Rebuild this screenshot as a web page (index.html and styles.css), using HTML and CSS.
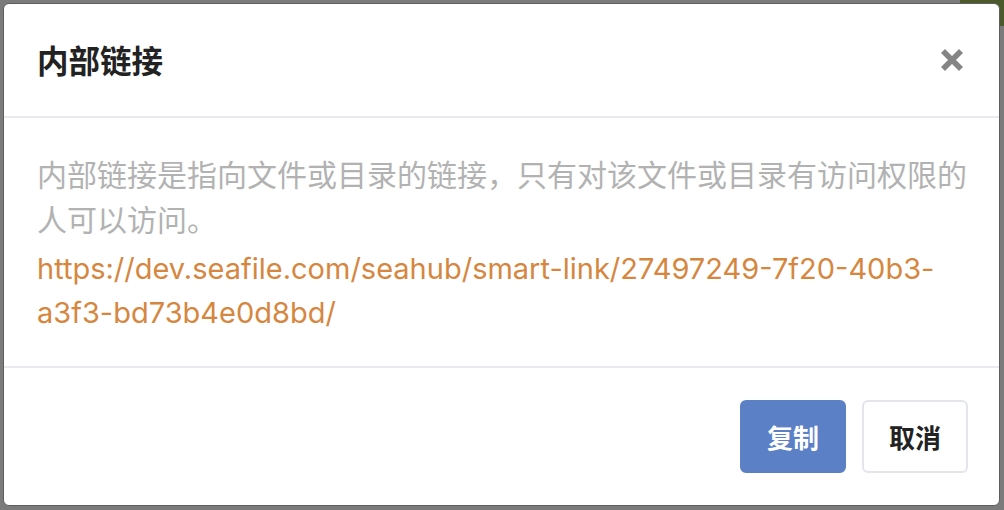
FILE: index.html
```html
<!DOCTYPE html>
<html lang="zh-CN">
  <head>
    <meta charset="UTF-8" />
    <meta name="viewport" content="width=device-width, initial-scale=1.0" />
    <title>内部链接</title>
    <link rel="stylesheet" href="styles.css">
  </head>
  <body>
    <div class="backdrop-leaf"></div>
    <div class="modal">
      <div class="modal-header">
        <h5 class="modal-title">内部链接</h5>
        <button class="close" aria-label="关闭">
          <svg width="24" height="24" viewBox="0 0 24 24">
            <path d="M3 3 L21 21 M21 3 L3 21" stroke="#858585" stroke-width="5.6" fill="none" />
          </svg>
        </button>
      </div>
      <div class="modal-body">
        <p class="tip">内部链接是指向文件或目录的链接，只有对该文件或目录有访问权限的人可以访问。</p>
        <p class="link">https://dev.seafile.com/seahub/smart-link/27497249-7f20-40b3-a3f3-bd73b4e0d8bd/</p>
      </div>
      <div class="modal-footer">
        <button class="btn btn-primary">复制</button>
        <button class="btn btn-secondary">取消</button>
      </div>
    </div>
  </body>
</html>
```

FILE: styles.css
```css
* {
  margin: 0px;
  padding: 0px;
  box-sizing: border-box;
}
body {
  width: 1004px;
  height: 510px;
  padding: 3px 4px 4px 3px;
  background-color: #7b7b7b;
  font-family: "Liberation Sans", "Noto Sans CJK SC", sans-serif;
  overflow: hidden;
  position: relative;
}
.backdrop-leaf {
  position: absolute;
  top: 0px;
  right: 0px;
  width: 44px;
  height: 26px;
  background-color: #4a5a2a;
}
.modal {
  position: relative;
  height: 503px;
  background-color: #fff;
  border: 1px solid #5e5e5e;
  border-radius: 6px;
  display: flex;
  flex-direction: column;
}
.modal-header {
  height: 114px;
  padding: 0px 35px 0px 33px;
  border-bottom: 2px solid #e9e9ee;
  display: flex;
  align-items: center;
  justify-content: space-between;
}
.modal-title {
  font-family: "Noto Sans CJK SC", sans-serif;
  font-size: 31.5px;
  font-weight: 700;
  color: #222;
  line-height: 1.5;
}
.close {
  border: none;
  background: none;
  width: 24px;
  height: 24px;
  display: flex;
}
.modal-body {
  height: 250px;
  padding: 33px 28px 0px 33px;
  border-bottom: 2px solid #e9e9ee;
}
.tip {
  font-family: "Noto Sans CJK SC", sans-serif;
  font-size: 30px;
  line-height: 45px;
  color: #b2b2b2;
  margin-bottom: 6px;
}
.link {
  font-family: "Inter", "Liberation Sans", sans-serif;
  font-size: 29px;
  line-height: 44px;
  color: #d6873f;
  overflow-wrap: break-word;
}
.modal-footer {
  flex: 1;
  padding-right: 31px;
  display: flex;
  align-items: center;
  justify-content: flex-end;
  gap: 16px;
}
.btn {
  width: 106px;
  height: 73px;
  border-radius: 6px;
  font-family: "Noto Sans CJK SC", sans-serif;
  font-size: 26px;
  font-weight: 700;
}
.btn-primary {
  background-color: #5b80c6;
  border: 2px solid #5b80c6;
  color: #fff;
}
.btn-secondary {
  background-color: #fff;
  border: 2px solid #e2e5ea;
  color: #222;
}
```
